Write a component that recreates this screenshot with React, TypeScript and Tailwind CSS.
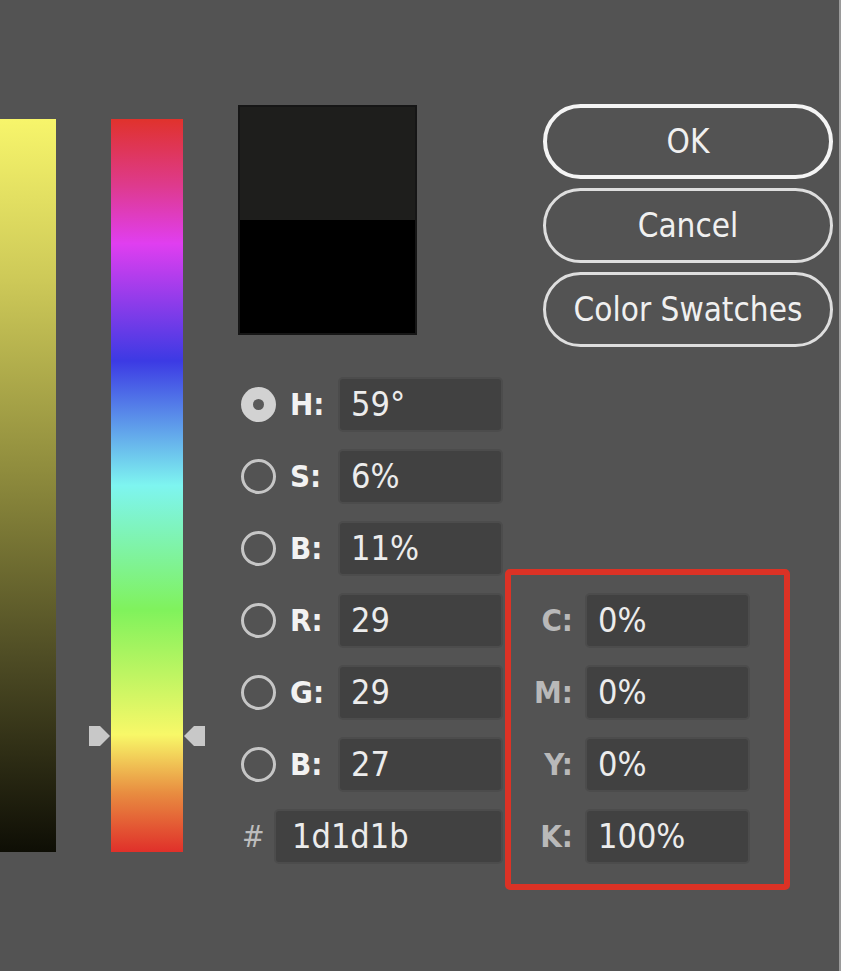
import React from 'react';

const font = { fontFamily: '"DejaVu Sans Condensed", "DejaVu Sans", sans-serif' };

interface FieldProps {
    label: string;
    value: string;
    selected?: boolean;
}

const Radio: React.FC<{ selected?: boolean }> = ({ selected }) =>
    selected ? (
        <div className="w-[35px] h-[35px] rounded-full bg-[#d2d2d2] flex items-center justify-center">
            <div className="w-[11px] h-[11px] rounded-full bg-[#5a5a5a]" />
        </div>
    ) : (
        <div className="w-[35px] h-[35px] rounded-full border-[3px] border-[#c6c6c6]" />
    );

const Input: React.FC<{ value: string; className?: string }> = ({ value, className }) => (
    <div
        className={
            'h-[55px] rounded-[5px] bg-[#414141] border-2 border-[#4c4c4c] flex items-center pl-[11px] text-[34px] text-[#ececec] ' +
            (className ?? 'w-[165px]')
        }
    >
        {value}
    </div>
);

const HsbRow: React.FC<FieldProps> = ({ label, value, selected }) => (
    <div className="flex items-center h-[55px]">
        <div className="ml-[3px]">
            <Radio selected={selected} />
        </div>
        <div className="ml-[14px] w-[48px] text-[31px] font-bold text-[#f2f2f2]">{label}:</div>
        <Input value={value} />
    </div>
);

const CmykRow: React.FC<{ label: string; value: string }> = ({ label, value }) => (
    <div className="flex items-center h-[55px]">
        <div className="w-[62px] text-right text-[31px] font-bold text-[#b9b9b9]">{label}:</div>
        <div className="ml-[12px]">
            <Input value={value} />
        </div>
    </div>
);

const Button: React.FC<{ text: string; primary?: boolean }> = ({ text, primary }) => (
    <div
        className={
            'w-[290px] h-[75px] rounded-full flex items-center justify-center text-[33px] text-[#f0f0f0] ' +
            (primary ? 'border-4 border-[#f4f4f4]' : 'border-[3px] border-[#dedede]')
        }
    >
        {text}
    </div>
);

const App: React.FC = () => {
    return (
        <div
            className="w-[841px] h-[971px] bg-[#535353] border-r-2 border-[#9a9a9a] flex overflow-hidden"
            style={font}
        >
            {/* color field + hue slider */}
            <div className="pt-[119px] flex items-start">
                <div className="w-[56px] h-[733px] bg-[linear-gradient(to_bottom,#f7f56b_0%,#cdc958_22%,#8f8c3d_48%,#4d4b24_74%,#0e0e05_100%)]" />
                <div className="ml-[55px] w-[72px] h-[733px] relative bg-[linear-gradient(to_bottom,#e0322c_0%,#de3a8c_9%,#e03ef0_17%,#3c3ae4_33%,#7ef5f0_50%,#80f25c_67%,#f8f868_84%,#e88c40_92%,#e0302a_100%)]">
                    <svg className="absolute left-[-23px] top-[606px]" width="23" height="22" viewBox="0 0 23 22">
                        <path d="M1 1 H12 L22 11 L12 21 H1 Z" fill="#c8c8c8" />
                    </svg>
                    <svg className="absolute right-[-23px] top-[606px]" width="23" height="22" viewBox="0 0 23 22">
                        <path d="M22 1 H11 L1 11 L11 21 H22 Z" fill="#c8c8c8" />
                    </svg>
                </div>
            </div>

            {/* swatch, fields, buttons */}
            <div className="ml-[55px] pt-[104px] flex-1 flex flex-col">
                <div className="flex items-start">
                    <div className="mt-[1px] w-[179px] h-[230px] border-2 border-[#161616] flex flex-col">
                        <div className="flex-1 bg-[#1e1e1c]" />
                        <div className="flex-1 bg-black" />
                    </div>
                    <div className="ml-[126px] flex flex-col gap-[9px]">
                        <Button text="OK" primary />
                        <Button text="Cancel" />
                        <Button text="Color Swatches" />
                    </div>
                </div>

                <div className="mt-[30px] flex items-start">
                    <div className="w-[265px] flex flex-col gap-[17px]">
                        <HsbRow label="H" value="59°" selected />
                        <HsbRow label="S" value="6%" />
                        <HsbRow label="B" value="11%" />
                        <HsbRow label="R" value="29" />
                        <HsbRow label="G" value="29" />
                        <HsbRow label="B" value="27" />
                        <div className="flex items-center h-[55px]">
                            <div className="ml-[4px] w-[32px] text-[30px] text-[#bdbdbd]">#</div>
                            <Input value="1d1d1b" className="w-[229px] pl-[16px]" />
                        </div>
                    </div>
                    <div className="ml-[2px] mt-[192px] w-[285px] h-[321px] border-[6px] border-[#dc3225] rounded-[5px] pt-[18px] flex flex-col gap-[17px]">
                        <CmykRow label="C" value="0%" />
                        <CmykRow label="M" value="0%" />
                        <CmykRow label="Y" value="0%" />
                        <CmykRow label="K" value="100%" />
                    </div>
                </div>
            </div>
        </div>
    );
};

export default App;
